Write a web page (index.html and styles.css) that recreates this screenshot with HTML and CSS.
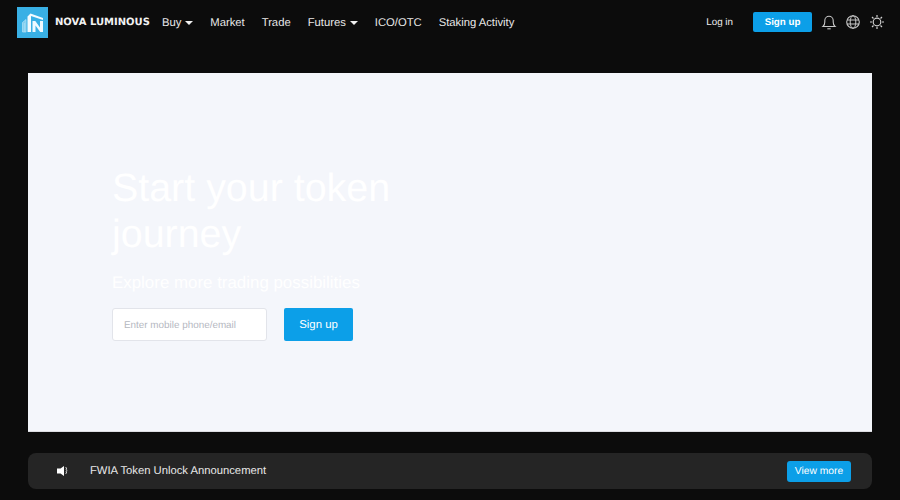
FILE: index.html
```html
<!DOCTYPE html>
<html lang="en">
<head>
<meta charset="utf-8">
<title>Nova Luminous</title>
<link rel="stylesheet" href="styles.css">
</head>
<body>
<header class="topbar">
  <div class="brand">
    <svg class="logo" viewBox="0 0 31 31" width="31" height="31">
      <rect width="31" height="31" fill="#39b0e5"/>
      <path d="M5.500 25V15.500L9 12.500V25zM7.300 25V16" fill="#7fcdef" stroke="#b4e3f7" stroke-width=".7"/>
      <path d="M10.500 25V9.500L13.500 6.500 26 11v2L14 9v16z" fill="#f4fbff"/>
      <path d="M15.500 25V14h2.800l4.700 6.500V14H26v11h-2.800l-4.700-6.500V25z" fill="#f0faff"/>
    </svg>
    <span class="brand-name">NOVA LUMINOUS</span>
  </div>
  <nav class="nav">
    <a class="nav-item">Buy<i class="caret"></i></a>
    <a class="nav-item">Market</a>
    <a class="nav-item">Trade</a>
    <a class="nav-item">Futures<i class="caret"></i></a>
    <a class="nav-item">ICO/OTC</a>
    <a class="nav-item">Staking Activity</a>
  </nav>
  <div class="actions">
    <a class="login">Log in</a>
    <button class="btn btn-small">Sign up</button>
    <svg class="icon" viewBox="0 0 16 16" width="16" height="16">
      <path d="M2 12.500c1-.8 1.800-2 1.800-4.500V6.500a4.200 4.200 0 0 1 8.400 0V8c0 2.500.8 3.700 1.800 4.500z" fill="none" stroke="#c8c8c8" stroke-width="1.100"/>
      <path d="M6.300 14.800h3.400" stroke="#c8c8c8" stroke-width="1.100"/>
    </svg>
    <svg class="icon" viewBox="0 0 16 16" width="16" height="16">
      <circle cx="8" cy="8" r="6.300" fill="none" stroke="#c8c8c8" stroke-width="1.100"/>
      <ellipse cx="8" cy="8" rx="2.800" ry="6.300" fill="none" stroke="#c8c8c8" stroke-width="1"/>
      <path d="M2 6h12M2 10h12" stroke="#c8c8c8" stroke-width="1"/>
    </svg>
    <svg class="icon" viewBox="0 0 16 16" width="16" height="16">
      <circle cx="8" cy="8" r="3.800" fill="none" stroke="#d0d0d0" stroke-width="1.200"/>
      <path d="M8 1v2M8 13v2M1 8h2M13 8h2M3 3l1.500 1.500M11.500 11.500L13 13M3 13l1.500-1.500M11.500 4.500L13 3" stroke="#d0d0d0" stroke-width="1.200"/>
    </svg>
  </div>
</header>
<main class="content">
  <section class="hero">
    <h1 class="hero-title">Start your token journey</h1>
    <p class="hero-sub">Explore more trading possibilities</p>
    <form class="hero-form">
      <input class="hero-input" type="text" placeholder="Enter mobile phone/email">
      <button class="btn btn-large" type="button">Sign up</button>
    </form>
  </section>
  <section class="notice">
    <svg class="speaker" viewBox="0 0 12 10" width="12" height="10">
      <path d="M0 2.500h3.500L7 0v10L3.500 7.500H0z" fill="#fff"/>
      <path d="M8.500 1.500l1.500.8-1.200 1 1.400 1.200-1.400 1.200 1.200 1-1.500.8" fill="none" stroke="#e8e8e8" stroke-width=".9"/>
    </svg>
    <span class="notice-text">FWIA Token Unlock Announcement</span>
    <button class="btn btn-more">View more</button>
  </section>
</main>
</body>
</html>
```

FILE: styles.css
```css
* { box-sizing: border-box; }
html, body { margin: 0; height: 100%; }
body {
  background: #0c0c0c;
  color: #fff;
  font-family: "Liberation Sans", Arial, sans-serif;
  text-rendering: geometricPrecision;
  overflow: hidden;
}
.topbar {
  display: flex;
  align-items: center;
  height: 44px;
  padding: 0 15px 0 17px;
}
.brand { display: flex; align-items: center; gap: 7px; }
.logo { display: block; }
.brand-name {
  font-family: "DejaVu Sans", sans-serif;
  font-weight: 700;
  font-size: 10px;
  color: #f2f2f2;
}
.nav { display: flex; align-items: center; gap: 17px; margin-left: 12px; padding-top: 1px; }
.nav-item { font-size: 11.25px; color: #e8e8e8; display: flex; align-items: center; }
.caret {
  width: 0; height: 0;
  margin-left: 4px;
  border-left: 4px solid transparent;
  border-right: 4px solid transparent;
  border-top: 4px solid #f0f0f0;
}
.actions { margin-left: auto; display: flex; align-items: center; }
.login { font-size: 9.8px; color: #eee; margin-right: 20px; }
.btn {
  border: 0;
  background: #0c9fe8;
  color: #fff;
  font-family: inherit;
  text-rendering: geometricPrecision;
  padding: 0;
  cursor: pointer;
}
.btn-small { width: 59px; height: 20px; border-radius: 2px; font-size: 9.75px; font-weight: 700; margin-right: 9px; }
.icon { display: block; margin-left: 8px; }
.btn-small + .icon { margin-left: 0; }
.content { padding: 29px 28px 0; display: flex; flex-direction: column; gap: 21px; }
.hero {
  height: 359px;
  background: #f4f6fb;
  border-bottom: 1px solid #dcdde2;
  padding: 92px 84px 0;
}
.hero-title {
  margin: 0;
  width: 300px;
  font-size: 39.4px;
  line-height: 46px;
  font-weight: 400;
  color: #fff;
}
.hero-sub { margin: 16px 0 0; font-size: 16.9px; line-height: 20px; color: #fff; }
.hero-form { display: flex; gap: 17px; margin-top: 15px; }
.hero-input {
  width: 155px;
  height: 33px;
  padding: 1px 11px 0;
  border: 1px solid #e2e4ea;
  border-radius: 3px;
  background: #fff;
  font-family: inherit;
  text-rendering: geometricPrecision;
  font-size: 9.9px;
}
.hero-input::placeholder { color: #b5b8bf; }
.btn-large { width: 69px; height: 33px; border-radius: 2px; font-size: 11.4px; }
.notice {
  height: 36px;
  background: #252525;
  border-radius: 8px;
  display: flex;
  align-items: center;
  padding: 0 21px 0 29px;
}
.speaker { display: block; }
.notice-text { margin-left: 21px; font-size: 11.25px; color: #e8e8e8; }
.btn-more { margin-left: auto; width: 64px; height: 21px; border-radius: 3px; font-size: 10.3px; }
```
